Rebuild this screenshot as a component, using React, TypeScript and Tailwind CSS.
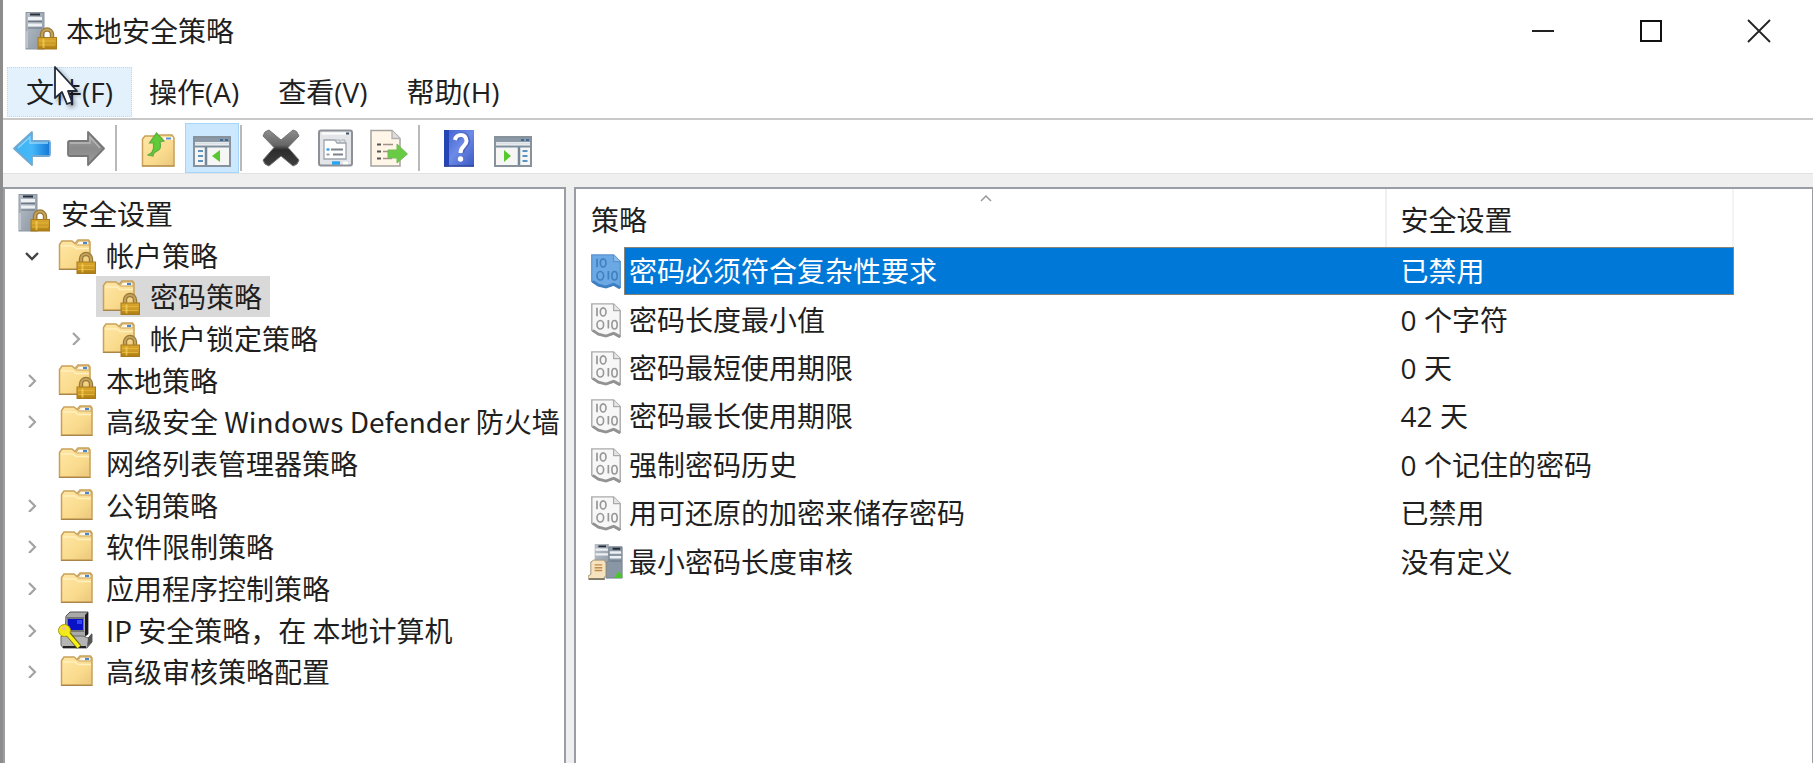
import type { ReactNode } from "react";

function Gradients() {
  return (
    <svg className="absolute size-0" aria-hidden="true">
      <defs>
        <linearGradient id="folder" x1="0" y1="0" x2="1" y2="1">
          <stop offset="0" stopColor="#ffe7a6" />
          <stop offset="0.6" stopColor="#fadb8d" />
          <stop offset="1" stopColor="#e9c67c" />
        </linearGradient>
        <linearGradient id="gold" x1="0" y1="0" x2="0" y2="1">
          <stop offset="0" stopColor="#d9a52c" />
          <stop offset="0.5" stopColor="#cf9d26" />
          <stop offset="1" stopColor="#a97a12" />
        </linearGradient>
        <linearGradient id="steel" x1="0" y1="0" x2="1" y2="1">
          <stop offset="0" stopColor="#b9c0c8" />
          <stop offset="1" stopColor="#8a96a3" />
        </linearGradient>
        <linearGradient id="blueArrow" x1="0" y1="0" x2="1" y2="0">
          <stop offset="0" stopColor="#3fb4f4" />
          <stop offset="0.5" stopColor="#45b8fa" />
          <stop offset="1" stopColor="#1277d6" />
        </linearGradient>
        <linearGradient id="grayArrow" x1="0" y1="0" x2="0" y2="1">
          <stop offset="0" stopColor="#a2a2a2" />
          <stop offset="0.5" stopColor="#8b8b8b" />
          <stop offset="1" stopColor="#9c9c9c" />
        </linearGradient>
        <linearGradient id="cross" x1="0" y1="0" x2="0" y2="1">
          <stop offset="0" stopColor="#8e8e8e" />
          <stop offset="0.42" stopColor="#666" />
          <stop offset="0.55" stopColor="#2c2c2c" />
          <stop offset="1" stopColor="#3f3f3f" />
        </linearGradient>
        <linearGradient id="help" x1="0" y1="0" x2="1" y2="1">
          <stop offset="0" stopColor="#3f5fd0" />
          <stop offset="0.5" stopColor="#6c8ae6" />
          <stop offset="1" stopColor="#3c58c4" />
        </linearGradient>
      </defs>
    </svg>
  );
}

function Icon({ children, className = "size-[38px]" }: { children: ReactNode; className?: string }) {
  return (
    <svg viewBox="0 0 38 38" className={`shrink-0 ${className}`} fill="none" aria-hidden="true">
      {children}
    </svg>
  );
}

function Lock() {
  return (
    <g>
      <path d="M23 28v-5a5 5 0 0 1 10 0v5" stroke="#96793c" strokeWidth="4.4" />
      <path d="M23 28v-5a5 5 0 0 1 10 0v5" stroke="#c6a257" strokeWidth="2" />
      <rect x="19" y="26" width="18.500" height="11.500" fill="url(#gold)" stroke="#a87c1c" />
      <path d="M20 29.500h16M20 33.500h16" stroke="#e3b33c" strokeWidth="1.200" />
      <path d="M24.500 27.500v9" stroke="#fadb62" strokeWidth="2" opacity=".6" />
    </g>
  );
}

function FolderShape() {
  return (
    <g>
      <path d="M1.500 33V8.500L4 5h10l3 2.500L20 4h10.500l1.500 2v27z" fill="url(#folder)" stroke="#c9a15a" strokeWidth="1.500" />
      <path d="M18 8.500 20.500 5H30l1 1v3H19z" fill="#fdf3d2" stroke="#cda765" />
      <path d="M22 7h3" stroke="#fff" strokeWidth="2" />
      <path d="M25 7h4" stroke="#4b86c6" strokeWidth="2.200" />
      <path d="M3 10h12l3 2.500h13" stroke="#fff0bf" strokeWidth="1.300" />
      <path d="M1 33.500h31.500" stroke="#a9854a" />
    </g>
  );
}

const FolderIcon = ({ inset = true }: { inset?: boolean }) => (
  <Icon>
    <g transform={inset ? "translate(2 0)" : undefined}>
      <FolderShape />
    </g>
  </Icon>
);

const LockedFolderIcon = () => (
  <Icon>
    <FolderShape />
    <Lock />
  </Icon>
);

const ServerIcon = () => (
  <Icon>
    <rect x="6" y="0.500" width="18" height="36.500" fill="url(#steel)" stroke="#8d97a2" />
    <path d="M8 6.500h14M8 13h14" stroke="#eef1f4" strokeWidth="3" />
    <path d="M8 9.500h14M8 16h14" stroke="#6c7783" />
    <path d="M10 2.500h10" stroke="#27303b" strokeWidth="2" />
    <path d="M7 19v17" stroke="#c7cdd4" strokeWidth="1.500" />
    <g transform="translate(-1 -0.500)">
      <Lock />
    </g>
  </Icon>
);

const KeyComputerIcon = () => (
  <Icon>
    <path d="M8 5l4-4h18v22l-4 3H7z" fill="#a9a9a9" stroke="#555" />
    <path d="M27 4l3-3v22l-3 2z" fill="#1c1c1c" />
    <rect x="9" y="6" width="17" height="15" fill="#777" />
    <rect x="10" y="8" width="15" height="11" fill="#0a12c8" />
    <path d="M19 9h5v4h-5z" fill="#3146ee" />
    <path d="M3 25h22l5 2 4-4v8l-5 6H5l-2-3z" fill="#b5b5b5" stroke="#666" />
    <path d="M30 27l4-5v9l-5 5z" fill="#555" />
    <path d="M5 36h23" stroke="#222" strokeWidth="2" />
    <path d="M7 19l14 17" stroke="#6b6300" strokeWidth="5.500" />
    <circle cx="6.500" cy="19.500" r="6" fill="#f2ea18" stroke="#a59a10" />
    <path d="M9 22l12 14" stroke="#f7f01a" strokeWidth="3.500" />
    <circle cx="6" cy="17.500" r="2" fill="#eec19a" />
  </Icon>
);

const PolicyIcon = ({ selected = false }: { selected?: boolean }) => {
  const ink = selected ? "#3f7fbd" : "#979797";
  return (
    <Icon className="size-[36px]">
      <g transform="translate(2 0)">
        <path
          d="M2 2h23l7 7v27l-5-3-5 2-5 1-8-2-7-4z"
          fill={selected ? "#6ba9e4" : "#f7f7f7"}
          stroke={selected ? "#5a93cd" : "#aaa"}
          strokeWidth="1.500"
        />
        <path d="M25 2v7h7" fill={selected ? "#8bbdec" : "#e4e4e4"} stroke={selected ? "#5a93cd" : "#aaa"} strokeWidth="1.300" />
        <path d="M3 30l6 4 8 2 8-3 7 4" stroke={selected ? "#3d7fc2" : "#929292"} strokeWidth="3" />
        <path d="M7.500 6v9M19.500 19v9" stroke={ink} strokeWidth="1.800" />
        <ellipse cx="14" cy="10.500" rx="3" ry="4.300" stroke={ink} strokeWidth="1.700" />
        <ellipse cx="11" cy="24" rx="3.500" ry="4.500" stroke={ink} strokeWidth="1.700" />
        <ellipse cx="26" cy="24" rx="2.800" ry="4.500" stroke={ink} strokeWidth="1.700" />
      </g>
    </Icon>
  );
};

const AuditIcon = () => (
  <Icon className="size-[36px]">
    <path d="M7 0h15v33H7z" fill="url(#steel)" />
    <path d="M22 3h14v33H19V20l3-2z" fill="#8997a5" stroke="#73808d" />
    <path d="M8 6h13M8 11h13M23 9h12M23 14h12" stroke="#edf1f4" strokeWidth="2.500" />
    <path d="M11 2.500h8M26 5h8" stroke="#222b35" strokeWidth="2" />
    <path d="M23 18h12" stroke="#64717e" />
    <path d="M3 19l3-2h11l2 3v13l-3 4H0v-3l3-2z" fill="#f6e3be" stroke="#9b9078" />
    <path d="M7 22h8M7 25h8M7 28h8" stroke="#c08a4b" strokeWidth="1.500" />
    <path d="M1 37h17" stroke="#66604f" strokeWidth="1.500" />
    <path d="M28 35l4-6 4 3v4h-8z" fill="#4cc52b" />
  </Icon>
);

const BackIcon = () => (
  <Icon>
    <path d="M1 19.500 19 3v9h16.500q1.500 0 1.500 1.500v12q0 1.500-1.500 1.500H19v9z" fill="url(#blueArrow)" stroke="#73a8cf" strokeWidth="1.800" strokeLinejoin="round" />
    <path d="M5 19 17 8v6h18" stroke="#8fd5fb" strokeWidth="1.300" />
  </Icon>
);

const ForwardIcon = () => (
  <Icon>
    <path d="M37 19.500 21 3v9H2.500Q1 12 1 13.500v12Q1 27 2.500 27H21v9z" fill="url(#grayArrow)" stroke="#777" strokeWidth="1.800" strokeLinejoin="round" />
    <path d="M3 14h20V8l10 11" stroke="#b9b9b9" strokeWidth="1.300" />
  </Icon>
);

const FolderUpIcon = () => (
  <Icon>
    <path d="M3.500 37V10L6 7h13l2-1h12l2 3v28z" fill="url(#folder)" stroke="#c9a15a" strokeWidth="1.500" />
    <path d="M23 10l2-2h9v3H23z" fill="#fff8e2" />
    <path d="M27 9.500h5" stroke="#5b93d2" strokeWidth="2" />
    <path d="M3 37h32.500" stroke="#b18d4d" />
    <path d="M8.500 26q7-1 6-12h-4L17.500 4l7.500 8-4 1q2 7-3 9-4 2-4 5z" fill="#5fcb38" stroke="#64a943" strokeWidth="1.200" />
  </Icon>
);

const PaneIcon = ({ right = false }: { right?: boolean }) => (
  <Icon>
    <rect x="1" y="8" width="36" height="29" fill="#f6f6f4" stroke="#88929c" strokeWidth="2" />
    <path d="M2 9h34v4H2z" fill="#8b99a6" />
    <path d="M2 14.500h34" stroke="#d8dfe5" strokeWidth="2" />
    <path d="M2 17.500h34" stroke="#7e8f9e" strokeWidth="2" />
    <path d="M27 11h3M32 11h3" stroke="#3e6a99" strokeWidth="2" />
    {right ? (
      <g>
        <path d="M25 18v18" stroke="#75879a" strokeWidth="2.500" />
        <path d="M28.500 22h5M28.500 27h5M28.500 32h5" stroke="#5e93bf" strokeWidth="2" />
        <path d="M10 21l7 6-7 6z" fill="#58c82f" />
      </g>
    ) : (
      <g>
        <path d="M13 18v18" stroke="#75879a" strokeWidth="2.500" />
        <path d="M5 22h5M5 27h5M5 32h5" stroke="#5e93bf" strokeWidth="2" />
        <path d="M27 21l-8 6 8 6z" fill="#58c82f" />
      </g>
    )}
  </Icon>
);

const DeleteIcon = () => (
  <Icon>
    <path
      d="M7 1l12 10L31 1q4 0 6 6L26 18.500 37 31q-1 5-6 6L19 27 7 37q-5-1-6-6l11-12.500L1 7q1-5 6-6z"
      fill="url(#cross)"
      stroke="#777"
      strokeWidth="1"
      strokeLinejoin="round"
    />
  </Icon>
);

const PropertiesIcon = () => (
  <Icon>
    <rect x="3" y="1.500" width="33" height="35" rx="2" fill="#e3e5e8" stroke="#8d9095" strokeWidth="2" />
    <path d="M6 4.500h26" stroke="#fff" strokeWidth="2" />
    <path d="M30 4.500h3" stroke="#3d536b" strokeWidth="2" />
    <path d="M8 30V11h11l2 3h9v16z" fill="#fff" stroke="#9da4ac" strokeWidth="1.300" />
    <path d="M20 11h4v3M25 11h4v3" stroke="#a6adb5" />
    <path d="M15 20.500h12M17 25.500h10" stroke="#7d838a" strokeWidth="1.800" />
    <path d="M10.500 20.500h3" stroke="#279be8" strokeWidth="2.200" />
    <path d="M10.500 25.500h3" stroke="#90989f" strokeWidth="1.800" />
    <path d="M16 34h8" stroke="#2da4f0" strokeWidth="3.500" />
    <path d="M27 34h5" stroke="#fff" strokeWidth="2.500" />
  </Icon>
);

const ExportIcon = () => (
  <Icon>
    <path d="M1 1.500h21l8 8V37H1z" fill="#fff6e8" stroke="#a4a29d" strokeWidth="1.500" />
    <path d="M22 1.500v8h8" fill="#ddd" stroke="#b0b0b0" strokeWidth="1.300" />
    <path d="M7 15.500h4M7 22.500h4M7 29.500h4" stroke="#555" strokeWidth="2" />
    <path d="M13 15.500h10M13 22.500h7M13 29.500h9" stroke="#a58e89" strokeWidth="1.700" />
    <path d="M18 21h9v-6l10.500 10L27 34v-5h-9z" fill="#67cc43" stroke="#76b85a" />
  </Icon>
);

const HelpIcon = () => (
  <Icon>
    <rect x="4" y="1" width="30" height="36.500" fill="url(#help)" />
    <path d="M4 1h5v36.500H4z" fill="#2645b4" />
    <path d="M4 37h30" stroke="#2e459b" strokeWidth="1.500" />
    <path d="M16 11q1-5 6-5t5.500 6c0 5-6 5-6 12" stroke="#33489d" strokeWidth="5.500" opacity=".5" />
    <path d="M15 11q1-5 6-5t5.500 6c0 5-6 5-6 12" stroke="#fff" strokeWidth="4" />
    <circle cx="20.500" cy="30" r="2.700" fill="#fff" />
  </Icon>
);

function Chevron({ open = false }: { open?: boolean }) {
  return (
    <svg viewBox="0 0 14 14" className="size-[14px]" fill="none" aria-hidden="true">
      {open ? (
        <path d="M1 5l6 6 6-6" stroke="#444" strokeWidth="2.400" />
      ) : (
        <path d="M4 2l6 6-6 6" stroke="#a3a3a3" strokeWidth="2.200" />
      )}
    </svg>
  );
}

type Branch = "open" | "closed" | "none";

interface TreeItem {
  label: string;
  level: 0 | 1 | 2;
  branch: Branch;
  icon: ReactNode;
  selected?: boolean;
}

const tree: TreeItem[] = [
  { label: "安全设置", level: 0, branch: "none", icon: <ServerIcon /> },
  { label: "帐户策略", level: 1, branch: "open", icon: <LockedFolderIcon /> },
  { label: "密码策略", level: 2, branch: "none", icon: <LockedFolderIcon />, selected: true },
  { label: "帐户锁定策略", level: 2, branch: "closed", icon: <LockedFolderIcon /> },
  { label: "本地策略", level: 1, branch: "closed", icon: <LockedFolderIcon /> },
  { label: "高级安全 Windows Defender 防火墙", level: 1, branch: "closed", icon: <FolderIcon /> },
  { label: "网络列表管理器策略", level: 1, branch: "none", icon: <FolderIcon inset={false} /> },
  { label: "公钥策略", level: 1, branch: "closed", icon: <FolderIcon /> },
  { label: "软件限制策略", level: 1, branch: "closed", icon: <FolderIcon /> },
  { label: "应用程序控制策略", level: 1, branch: "closed", icon: <FolderIcon /> },
  { label: "IP 安全策略，在 本地计算机", level: 1, branch: "closed", icon: <KeyComputerIcon /> },
  { label: "高级审核策略配置", level: 1, branch: "closed", icon: <FolderIcon /> },
];

const indent = { 0: "pl-[2px]", 1: "pl-[16px]", 2: "pl-[60px]" };

const policies = [
  { name: "密码必须符合复杂性要求", value: "已禁用" },
  { name: "密码长度最小值", value: "0 个字符" },
  { name: "密码最短使用期限", value: "0 天" },
  { name: "密码最长使用期限", value: "42 天" },
  { name: "强制密码历史", value: "0 个记住的密码" },
  { name: "用可还原的加密来储存密码", value: "已禁用" },
  { name: "最小密码长度审核", value: "没有定义" },
];

function TitleBar() {
  return (
    <header className="flex h-[67px] items-start justify-between">
      <div className="flex h-[62px] items-center gap-2 pl-[17px]">
        <ServerIcon />
        <h1>本地安全策略</h1>
      </div>
      <div className="flex">
        <button type="button" aria-label="最小化" className="flex h-[62px] w-[108px] items-center justify-center">
          <svg viewBox="0 0 24 24" className="size-6" stroke="#222" strokeWidth="2" aria-hidden="true">
            <path d="M1 12h22" />
          </svg>
        </button>
        <button type="button" aria-label="最大化" className="flex h-[62px] w-[108px] items-center justify-center">
          <svg viewBox="0 0 24 24" className="size-6" fill="none" stroke="#111" strokeWidth="2" aria-hidden="true">
            <path d="M2 2h20v20H2z" />
          </svg>
        </button>
        <button type="button" aria-label="关闭" className="flex h-[62px] w-[108px] items-center justify-center">
          <svg viewBox="0 0 24 24" className="size-6" stroke="#222" strokeWidth="1.800" aria-hidden="true">
            <path d="M1 1l22 22M23 1 1 23" />
          </svg>
        </button>
      </div>
    </header>
  );
}

function MenuBar() {
  return (
    <nav className="flex h-[51px] pb-[1px] pl-1">
      <button type="button" className="border border-dotted border-[#b5dcfb] bg-[#e3f1fd] px-[18px]">
        文件(F)
      </button>
      <button type="button" className="pr-[22px] pl-[17px]">操作(A)</button>
      <button type="button" className="pr-[22px] pl-[17px]">查看(V)</button>
      <button type="button" className="pr-[22px] pl-[17px]">帮助(H)</button>
    </nav>
  );
}

function ToolButton({ label, active = false, children }: { label: string; active?: boolean; children: ReactNode }) {
  return (
    <button
      type="button"
      aria-label={label}
      aria-pressed={active || undefined}
      className={`flex h-[50px] w-[54px] items-center justify-center ${active ? "border border-[#a6d5fa] bg-[#cce8ff]" : ""}`}
    >
      {children}
    </button>
  );
}

const Separator = () => <div className="h-[46px] w-[2px] bg-[#b9b9b9]" />;

function Toolbar() {
  return (
    <div className="border-t-2 border-[#c9c9c9] pt-[3px] pl-[2px]">
      <div className="flex items-center">
        <div className="flex pr-[2px]">
          <ToolButton label="后退"><BackIcon /></ToolButton>
          <ToolButton label="前进"><ForwardIcon /></ToolButton>
        </div>
        <Separator />
        <div className="flex pr-[1px] pl-[14px]">
          <ToolButton label="上一级"><FolderUpIcon /></ToolButton>
          <ToolButton label="显示/隐藏控制台树" active><PaneIcon /></ToolButton>
        </div>
        <Separator />
        <div className="flex pr-[2px] pl-[12px]">
          <ToolButton label="删除"><DeleteIcon /></ToolButton>
          <ToolButton label="属性"><PropertiesIcon /></ToolButton>
          <ToolButton label="导出列表"><ExportIcon /></ToolButton>
        </div>
        <Separator />
        <div className="flex pl-[12px]">
          <ToolButton label="帮助"><HelpIcon /></ToolButton>
          <ToolButton label="显示/隐藏操作窗格"><PaneIcon right /></ToolButton>
        </div>
      </div>
    </div>
  );
}

function TreePane() {
  return (
    <aside className="w-[563px] shrink-0 border-2 border-b-0 border-[#9a9da3] bg-white pt-[3px] font-['Noto_Sans_CJK_SC',sans-serif]">
      <ul role="tree" aria-label="安全设置" className="flex h-[500px] flex-col">
        {tree.map((item) => (
          <li
            key={item.label}
            role="treeitem"
            aria-selected={item.selected ?? false}
            className={`flex min-h-0 flex-1 items-center ${indent[item.level]}`}
          >
            {item.level > 0 && (
              <span className="flex w-[31px] shrink-0 items-center pl-[4px]">
                {item.branch !== "none" && <Chevron open={item.branch === "open"} />}
              </span>
            )}
            <button
              type="button"
              className={`flex h-[41px] items-center gap-[10px] pr-[8px] pl-[6px] whitespace-nowrap ${item.selected ? "bg-[#d9d9d9]" : ""}`}
            >
              {item.icon}
              {item.label}
            </button>
          </li>
        ))}
      </ul>
    </aside>
  );
}

function PolicyPane() {
  return (
    <main className="min-w-0 flex-1 border-2 border-r border-b-0 border-[#9a9da3] bg-white pr-[78px]">
      <table className="w-full table-fixed border-separate border-spacing-0 text-left">
        <colgroup>
          <col className="w-[70%]" />
          <col className="w-[30%]" />
        </colgroup>
        <thead>
          <tr className="h-[58px]">
            <th scope="col" className="relative border-r-2 border-[#efefef] p-0 pt-1 pl-[15px] font-normal">
              策略
              <svg viewBox="0 0 12 8" className="absolute top-[5px] left-1/2 h-2 w-3" fill="none" stroke="#999" strokeWidth="1.500" aria-hidden="true">
                <path d="M1 7l5-5 5 5" />
              </svg>
            </th>
            <th scope="col" className="border-r-2 border-[#f3f3f3] p-0 pt-1 pl-[14px] font-normal">安全设置</th>
          </tr>
        </thead>
      </table>
      <table aria-label="密码策略" className="h-[339px] w-full table-fixed border-separate border-spacing-0 text-left">
        <colgroup>
          <col className="w-[70%]" />
          <col className="w-[30%]" />
        </colgroup>
        <tbody>
          {policies.map((policy, index) => {
            const selected = index === 0;
            return (
              <tr key={policy.name} aria-selected={selected} className="h-[48px]">
                <td className="p-0">
                  <div className="flex h-[48px] items-center pl-[12px]">
                    {index === policies.length - 1 ? <AuditIcon /> : <PolicyIcon selected={selected} />}
                    <span
                      className={`flex h-full flex-1 items-center pl-[4px] ${selected ? "border-y border-l border-[#8a8377] bg-[#0078d7] text-white" : "border-l border-transparent"}`}
                    >
                      {policy.name}
                    </span>
                  </div>
                </td>
                <td className="p-0">
                  <div
                    className={`flex h-[48px] items-center pl-[14px] ${selected ? "border-y border-r border-[#8a8377] bg-[#0078d7] text-white" : ""}`}
                  >
                    {policy.value}
                  </div>
                </td>
              </tr>
            );
          })}
        </tbody>
      </table>
    </main>
  );
}

function Pointer() {
  return (
    <svg viewBox="0 0 28 42" className="pointer-events-none absolute top-[65px] left-[50px] h-[42px] w-7 drop-shadow-[3px_3px_2px_rgba(0,0,0,0.35)]" aria-hidden="true">
      <path d="M2 2v31l7-6 5 12 5-2-4-11h9z" fill="#fff" stroke="#222b3a" strokeWidth="1.800" strokeLinejoin="round" />
    </svg>
  );
}

export default function App() {
  return (
    <div className="relative flex min-h-screen flex-col overflow-hidden border-l-3 border-[#8c8c8c] bg-white font-['Open_Sans','Noto_Sans_CJK_SC',sans-serif] text-[28px] leading-[40px] text-[#1f1f1f]">
      <Gradients />
      <TitleBar />
      <MenuBar />
      <Toolbar />
      <div className="flex flex-1 gap-[8px] border-t border-[#e2e2e2] bg-[#efefef] pt-[13px]">
        <TreePane />
        <PolicyPane />
      </div>
      <Pointer />
    </div>
  );
}
